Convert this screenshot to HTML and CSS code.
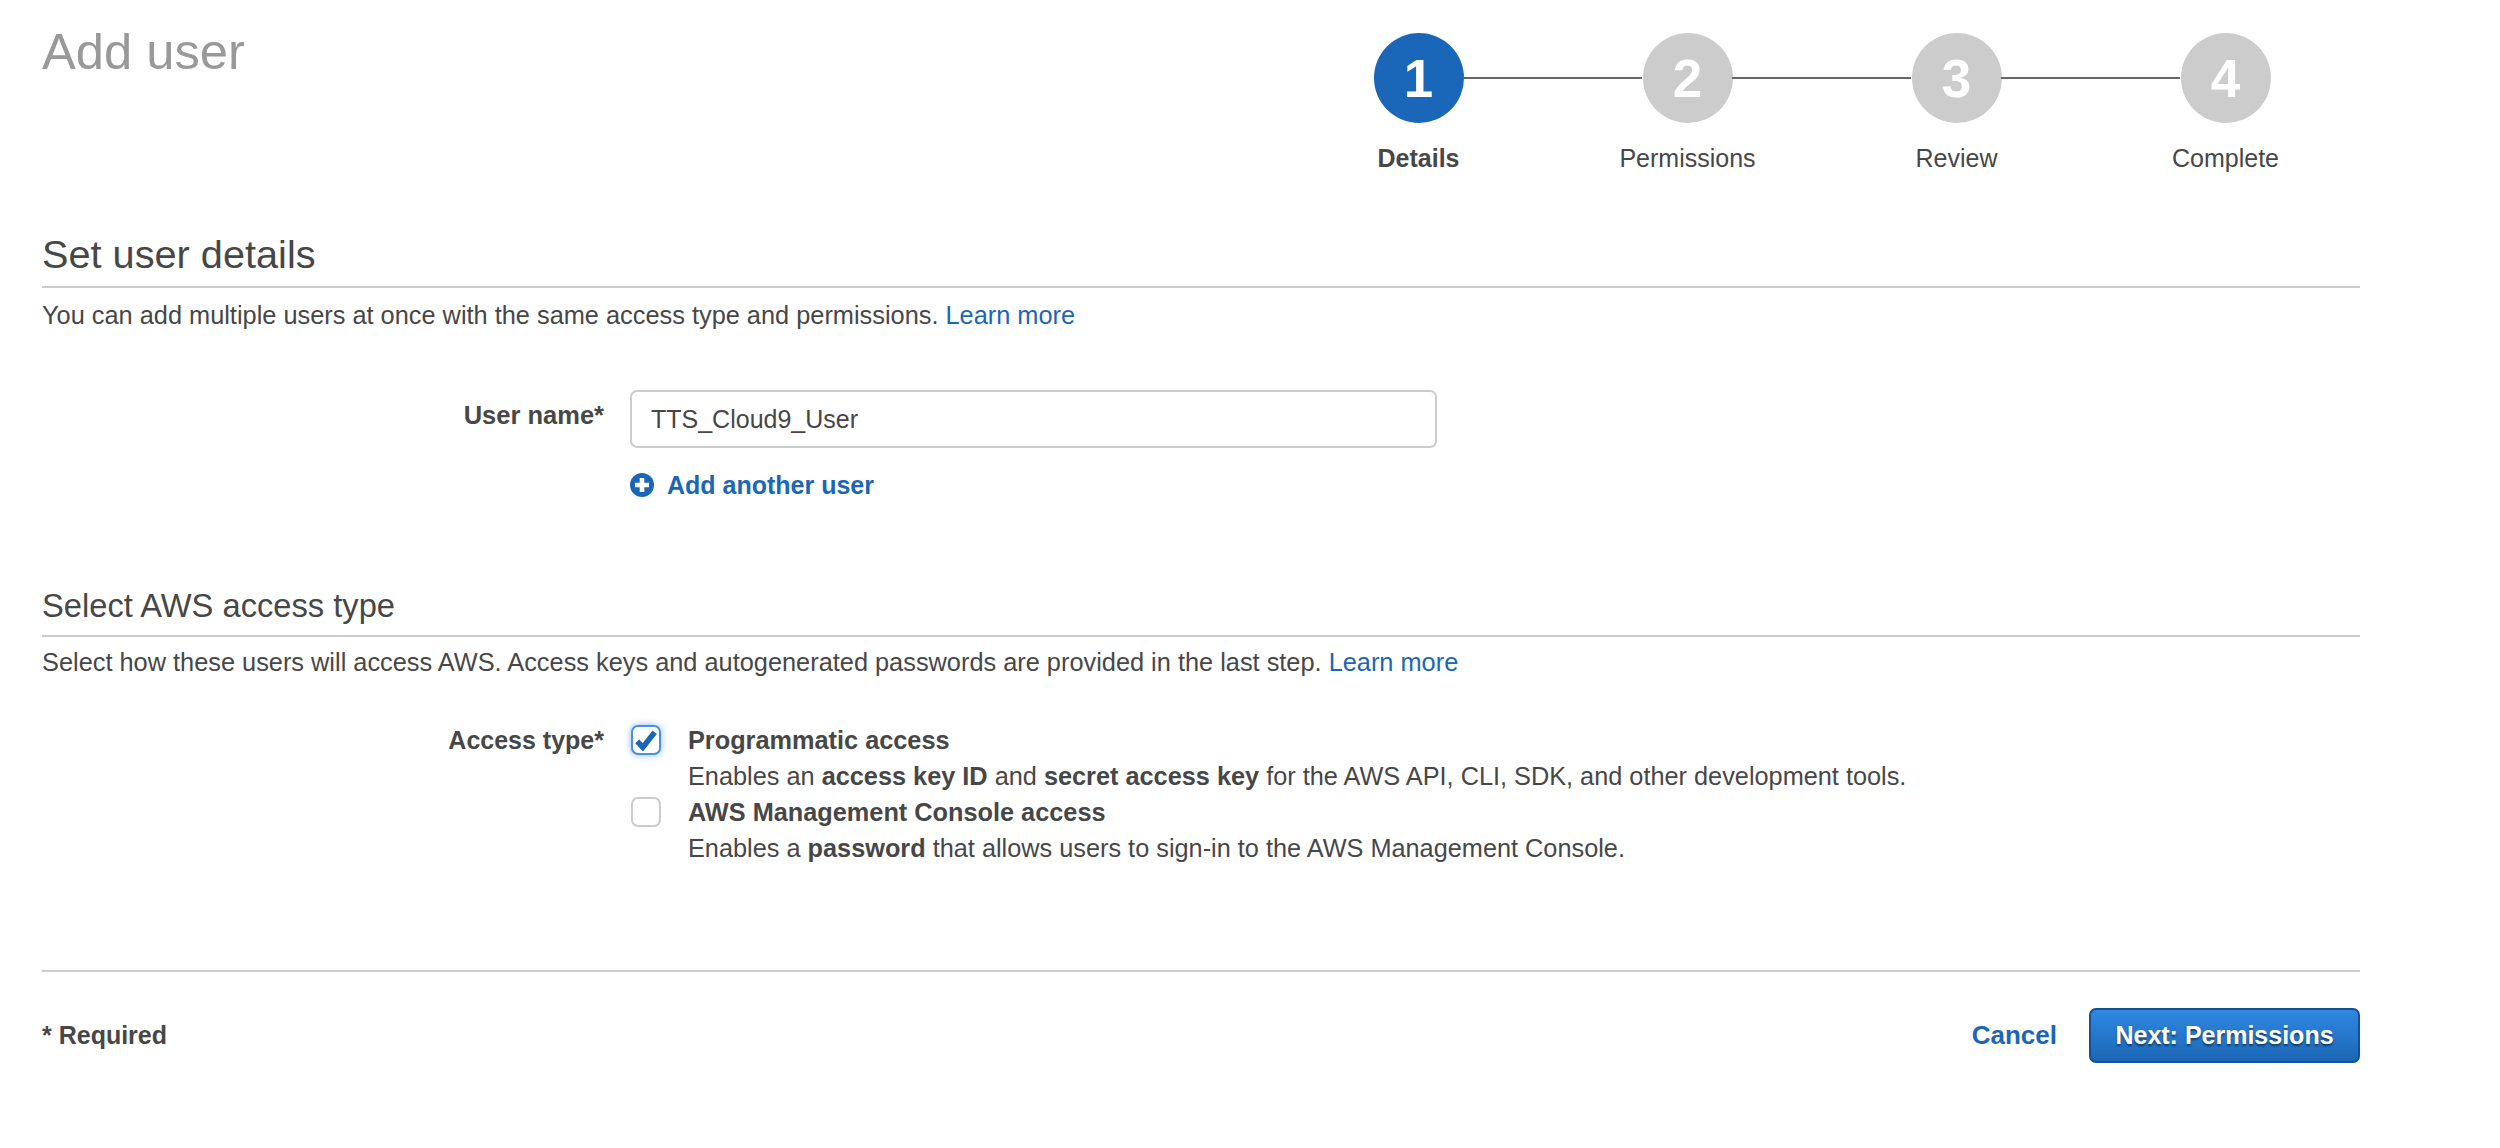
FILE: index.html
```html
<!DOCTYPE html>
<html lang="en">
<head>
<meta charset="utf-8">
<title>Add user</title>
<link rel="stylesheet" href="styles.css">
</head>
<body>
<main class="page">
  <header class="top">
    <h1 class="title">Add user</h1>
    <ol class="steps">
      <li class="step step-active"><span class="dot">1</span><span class="step-label">Details</span></li>
      <li class="step"><span class="dot">2</span><span class="step-label">Permissions</span></li>
      <li class="step"><span class="dot">3</span><span class="step-label">Review</span></li>
      <li class="step"><span class="dot">4</span><span class="step-label">Complete</span></li>
    </ol>
  </header>

  <section class="details">
    <h2 class="heading heading-large">Set user details</h2>
    <p class="intro">You can add multiple users at once with the same access type and permissions. <a class="link" href="#">Learn more</a></p>
    <div class="row row-name">
      <label class="row-label" for="user">User name*</label>
      <div class="row-control">
        <input class="text-input" id="user" type="text" value="TTS_Cloud9_User">
        <a class="add-user" href="#">
          <svg class="add-icon" viewBox="0 0 24 24" aria-hidden="true"><circle cx="12" cy="12" r="12" fill="#1a66b8"/><path d="M12 5v14M5 12h14" stroke="#fff" stroke-width="4.6" fill="none"/></svg>
          <span>Add another user</span>
        </a>
      </div>
    </div>
  </section>

  <section class="access">
    <h2 class="heading heading-small">Select AWS access type</h2>
    <p class="intro intro-tight">Select how these users will access AWS. Access keys and autogenerated passwords are provided in the last step. <a class="link" href="#">Learn more</a></p>
    <div class="row row-access">
      <div class="row-label">Access type*</div>
      <div class="options">
        <div class="option">
          <span class="box box-checked">
            <svg class="check" viewBox="0 0 24 24" aria-hidden="true"><path d="M2.5 13.5l6 6.5L21.5 3.5" stroke="#1a66b8" stroke-width="6" fill="none"/></svg>
          </span>
          <div class="option-text">
            <div class="option-title">Programmatic access</div>
            <div>Enables an <b>access key ID</b> and <b>secret access key</b> for the AWS API, CLI, SDK, and other development tools.</div>
          </div>
        </div>
        <div class="option">
          <span class="box"></span>
          <div class="option-text">
            <div class="option-title">AWS Management Console access</div>
            <div>Enables a <b>password</b> that allows users to sign-in to the AWS Management Console.</div>
          </div>
        </div>
      </div>
    </div>
  </section>

  <footer class="footer">
    <div class="required">* Required</div>
    <div class="actions">
      <a class="cancel" href="#">Cancel</a>
      <button class="next" type="button">Next: Permissions</button>
    </div>
  </footer>
</main>
</body>
</html>
```

FILE: styles.css
```css
* { box-sizing: border-box; }
html, body { margin: 0; background: #fff; }
body {
  font-family: "Liberation Sans", Arial, sans-serif;
  font-size: 25px;
  color: #474747;
}
.page { width: 2318px; margin-left: 42px; height: 1148px; }
.top { display: flex; justify-content: space-between; height: 231px; }
.title { margin: 23px 0 0; font-size: 50.7px; line-height: 58px; font-weight: 400; color: #999; }
.steps { display: flex; list-style: none; margin: 33px 0 0; padding: 0; }
.step { position: relative; width: 269px; display: flex; flex-direction: column; align-items: center; }
.step:not(:last-child)::after {
  content: ""; position: absolute; top: 44px; left: 179px; width: 179px; height: 2px; background: #666;
}
.dot {
  width: 90px; height: 90px; border-radius: 50%; background: #ccc; color: #fff;
  display: flex; align-items: center; justify-content: center; font-size: 53px; font-weight: 700;
}
.step-active .dot { background: #1a66b8; }
.step-label { margin-top: 20px; line-height: 30px; font-size: 25px; }
.step-active .step-label { font-weight: 700; }
.heading { margin: 0; font-weight: 400; }
.heading-large { font-size: 39.7px; line-height: 46px; padding-bottom: 9px; border-bottom: 2px solid #ccc; }
.heading-small { font-size: 32.7px; line-height: 38px; padding-bottom: 10px; border-bottom: 2px solid #ccc; }
.intro { margin: 12px 0 0; line-height: 30px; font-size: 25.35px; }
.intro-tight { margin-top: 10px; }
.link { color: #1a66b8; text-decoration: none; }
.row { display: grid; grid-template-columns: 562px 1fr; column-gap: 26px; }
.row-label { text-align: right; font-weight: 700; }
.row-name { margin-top: 60px; }
.row-name .row-label { padding-top: 10px; line-height: 30px; font-size: 25.5px; }
.row-control { display: flex; flex-direction: column; align-items: flex-start; }
.text-input {
  width: 807px; height: 58px; padding: 0 19px; border: 2px solid #ccc; border-radius: 7px;
  font: 25px "Liberation Sans", Arial, sans-serif; color: #474747; background: #fff;
}
.add-user {
  display: flex; align-items: center; gap: 13px; margin-top: 22px; line-height: 30px;
  color: #1a66b8; font-weight: 700; text-decoration: none;
}
.add-icon { width: 24px; height: 24px; }
.details { height: 356px; }
.access { height: 383px; }
.row-access { margin-top: 45px; }
.row-access .row-label { line-height: 36px; }
.options { display: flex; flex-direction: column; }
.option { display: flex; gap: 27px; line-height: 36px; font-size: 25.3px; }
.option-title { font-weight: 700; }
.option-text { height: 72px; }
.box {
  flex: none; width: 30px; height: 30px; margin: 3px 0 0 1px; border: 2px solid #ccc; border-radius: 7px;
  background: #fff; display: flex; align-items: center; justify-content: center;
}
.box-checked { border-color: #4a90e2; box-shadow: 0 0 7px rgba(74, 144, 226, .6); }
.check { width: 22px; height: 22px; }
.footer {
  display: flex; justify-content: space-between; align-items: center;
  border-top: 2px solid #ccc; padding-top: 36px;
}
.required { font-weight: 700; }
.actions { display: flex; align-items: center; gap: 32px; }
.cancel { color: #1a66b8; font-weight: 700; font-size: 26px; text-decoration: none; }
.next {
  width: 271px; height: 55px; padding: 0; border: 2px solid #15508f; border-radius: 7px;
  background: linear-gradient(#2f88e2, #1c66b5); color: #fff;
  font: 700 25px "Liberation Sans", Arial, sans-serif; text-shadow: 0 2px 2px rgba(0, 0, 0, .45);
}
```
